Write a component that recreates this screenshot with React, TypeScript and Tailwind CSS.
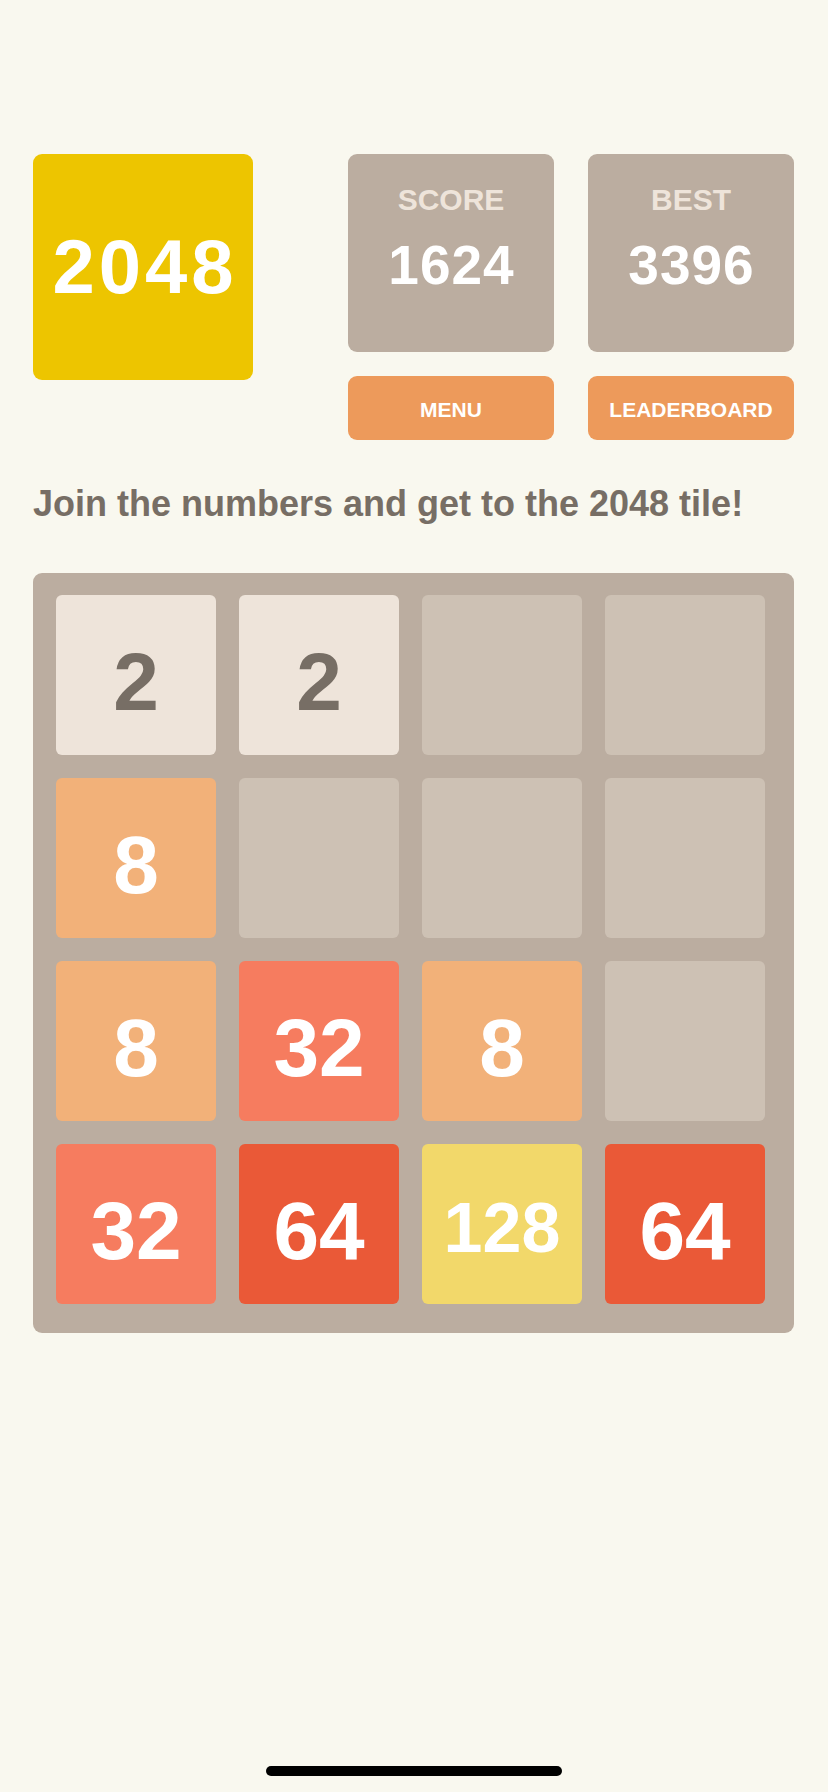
import React from "react";

const FONT = { fontFamily: '"Liberation Sans", Arial, sans-serif' };

const tiles: (number | null)[][] = [
  [2, 2, null, null],
  [8, null, null, null],
  [8, 32, 8, null],
  [32, 64, 128, 64],
];

function tileClass(v: number | null): string {
  switch (v) {
    case 2:
      return "bg-[#eee4da] text-[#776e65] text-[82px] pt-[14px]";
    case 8:
      return "bg-[#f2b179] text-white text-[82px] pt-[14px]";
    case 32:
      return "bg-[#f67c5f] text-white text-[82px] pt-[14px]";
    case 64:
      return "bg-[#ea5937] text-white text-[82px] pt-[14px]";
    case 128:
      return "bg-[#f2d86a] text-white text-[70px] pt-[8px]";
    default:
      return "bg-[#cdc1b4]";
  }
}

function ScoreBox({ label, value }: { label: string; value: string }) {
  return (
    <div className="w-[206px] h-[198px] rounded-[9px] bg-[#bbada0] flex flex-col items-center pt-[31px]">
      <div className="text-[30px] leading-none font-bold text-[#eee4da]">{label}</div>
      <div className="mt-[23px] text-[55px] leading-none font-bold text-white tracking-[1px] pl-[1px]">{value}</div>
    </div>
  );
}

function Btn({ label }: { label: string }) {
  return (
    <div className="w-[206px] h-[64px] rounded-[9px] bg-[#ed9a5b] flex items-center justify-center pt-[3px]">
      <span className="text-[21px] leading-none font-bold text-white">{label}</span>
    </div>
  );
}

export default function App() {
  return (
    <div className="min-h-[1792px] w-[828px] bg-[#f9f8ef] relative" style={FONT}>
      <div className="pt-[154px] px-[33px]">
        <div className="flex">
          <div className="w-[220px] h-[226px] rounded-[9px] bg-[#edc500] flex items-center justify-center">
            <span className="text-[76px] leading-none font-bold text-white tracking-[4px] pl-[4px]">2048</span>
          </div>
          <div className="ml-[95px] flex flex-col gap-[24px]">
            <div className="flex gap-[34px]">
              <ScoreBox label="SCORE" value="1624" />
              <ScoreBox label="BEST" value="3396" />
            </div>
            <div className="flex gap-[34px]">
              <Btn label="MENU" />
              <Btn label="LEADERBOARD" />
            </div>
          </div>
        </div>
        <div className="mt-[46px] text-[36px] leading-none font-bold text-[#776e65] whitespace-nowrap">
          Join the numbers and get to the 2048 tile!
        </div>
        <div className="mt-[51px] w-[761px] h-[760px] rounded-[9px] bg-[#bbada0] pt-[22px] pl-[23px] pr-[29px] pb-[29px]">
          <div className="grid grid-cols-[repeat(4,160px)] grid-rows-[repeat(4,160px)] gap-[23px]">
            {tiles.flat().map((v, i) => (
              <div
                key={i}
                className={`rounded-[6px] flex items-center justify-center font-bold leading-none ${tileClass(v)}`}
              >
                {v !== null ? v : ""}
              </div>
            ))}
          </div>
        </div>
      </div>
      <div className="absolute left-[266px] top-[1766px] w-[296px] h-[10px] rounded-full bg-black" />
    </div>
  );
}
